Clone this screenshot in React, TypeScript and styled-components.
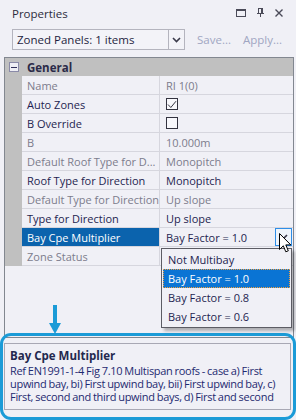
import React from "react";
import styled, { createGlobalStyle } from "styled-components";

const FONT = `"Open Sans", "Noto Sans", sans-serif`;

const Global = createGlobalStyle`
  html, body { margin: 0; padding: 0; background: #f0f0f6; }
  body { font-family: ${FONT}; font-size: 11px; color: #1e1e50; }
  * { box-sizing: border-box; }
`;

const Panel = styled.div`
  position: relative;
  width: 296px;
  height: 420px;
  background: #f0f0f6;
  display: flex;
  flex-direction: column;
  overflow: hidden;
`;

const TitleBar = styled.div`
  height: 27px;
  display: flex;
  align-items: center;
  padding: 0 12px 0 12px;
  font-size: 11.5px;
  color: #2c2c3c;
`;

const Title = styled.div`
  flex: 1;
  margin-top: -1px;
`;

const TitleIcons = styled.div`
  display: flex;
  align-items: center;
  gap: 11px;
  margin-top: -2px;
  margin-right: 1px;
`;

const Toolbar = styled.div`
  height: 21px;
  margin-top: 2px;
  display: flex;
  align-items: center;
  padding-left: 12px;
`;

const Combo = styled.div`
  width: 173px;
  height: 21px;
  border: 1px solid #b4b4be;
  display: flex;
  align-items: center;
  background: #f3f3f8;
`;

const ComboText = styled.div`
  flex: 1;
  padding-left: 4px;
  font-size: 11.5px;
  color: #1e1e40;
`;

const ComboButton = styled.div`
  width: 16px;
  height: 100%;
  border-left: 1px solid #b4b4be;
  display: flex;
  align-items: center;
  justify-content: center;
`;

const ToolLink = styled.span<{ $ml: number }>`
  margin-left: ${(p) => p.$ml}px;
  color: #a0a6c2;
  font-size: 11.5px;
`;

const Grid = styled.div`
  margin: 7px 2px 0 4px;
  height: 281px;
  border: 1px solid #828790;
  display: flex;
  flex-direction: column;
  position: relative;
`;

const HeaderRow = styled.div`
  height: 18px;
  background: #c0c0c0;
  display: flex;
  align-items: center;
  font-weight: 700;
  font-size: 11.5px;
  color: #2a2a48;
`;

const Expander = styled.div`
  width: 10px;
  height: 10px;
  margin-left: 4px;
  margin-right: 8px;
  border: 1px solid #8a8aa8;
  background: #eeeef4;
  display: flex;
  align-items: center;
  justify-content: center;
  &::after {
    content: "";
    width: 6px;
    height: 1px;
    background: #30305a;
  }
`;

const Row = styled.div`
  display: grid;
  grid-template-columns: 17px 138px 1fr;
  height: 19px;
`;

const Gutter = styled.div`
  background: #c0c0c0;
`;

const NameCell = styled.div<{ $muted?: boolean; $selected?: boolean }>`
  border-bottom: 1px solid #d6d6de;
  border-right: 1px solid #d6d6de;
  padding-left: 5px;
  display: flex;
  align-items: center;
  white-space: nowrap;
  overflow: hidden;
  color: ${(p) => (p.$selected ? "#ffffff" : p.$muted ? "#7c7c8c" : "#1e1e50")};
  background: ${(p) => (p.$selected ? "#0b63ad" : "transparent")};
`;

const ValueCell = styled.div<{ $muted?: boolean }>`
  border-bottom: 1px solid #d6d6de;
  padding-left: 6px;
  display: flex;
  align-items: center;
  white-space: nowrap;
  overflow: hidden;
  position: relative;
  color: ${(p) => (p.$muted ? "#7c7c8c" : "#1e1e50")};
`;

const Check = styled.div`
  width: 12px;
  height: 12px;
  border: 1px solid #333340;
  background: #f8f8fc;
  display: flex;
  align-items: center;
  justify-content: center;
`;

const EditorButton = styled.div`
  position: absolute;
  right: 1px;
  top: 0;
  width: 17px;
  height: 18px;
  border: 1px solid #2e8ee8;
  background: #eef4fb;
  display: flex;
  align-items: center;
  justify-content: center;
`;

const Popup = styled.div`
  position: absolute;
  left: 161px;
  top: 248px;
  width: 131px;
  border: 1px solid #5c5c64;
  background: #f0f0f6;
  box-shadow: 3px 3px 3px rgba(0, 0, 0, 0.28);
  padding: 1px 1px;
  z-index: 5;
`;

const PopupItem = styled.div<{ $selected?: boolean }>`
  height: 19px;
  display: flex;
  align-items: center;
  padding-left: 4px;
  color: ${(p) => (p.$selected ? "#ffffff" : "#1e1e50")};
  background: ${(p) => (p.$selected ? "#0a74d4" : "transparent")};
  border: 1px dotted ${(p) => (p.$selected ? "#f0a040" : "transparent")};
`;

const Description = styled.div`
  margin: 5px 5px 0 4px;
  height: 67px;
  border: 1px solid #a8a8b4;
  padding: 4px 3px 0 5px;
  overflow: hidden;
`;

const DescTitle = styled.div`
  font-weight: 700;
  font-size: 11.5px;
  color: #23284e;
  line-height: 15px;
  margin-bottom: 1px;
`;

const DescBody = styled.div`
  color: #1e2a70;
  line-height: 13px;
  letter-spacing: -0.3px;
  word-spacing: -0.5px;
`;

const Frame = styled.div`
  position: absolute;
  left: 0;
  top: 333px;
  width: 296px;
  height: 87px;
  border: 3.5px solid #1b9bd7;
  border-radius: 11px;
  pointer-events: none;
`;

const Arrow = styled.svg`
  position: absolute;
  left: 48px;
  top: 305px;
`;

const Cursor = styled.svg`
  position: absolute;
  left: 279px;
  top: 233px;
  z-index: 6;
`;

type Prop = {
  name: string;
  value?: string;
  muted?: boolean;
  check?: boolean;
  selected?: boolean;
};

const props: Prop[] = [
  { name: "Name", value: "RI 1(0)", muted: true },
  { name: "Auto Zones", check: true },
  { name: "B Override", check: false },
  { name: "B", value: "10.000m", muted: true },
  { name: "Default Roof Type for D...", value: "Monopitch", muted: true },
  { name: "Roof Type for Direction", value: "Monopitch" },
  { name: "Default Type for Direction", value: "Up slope", muted: true },
  { name: "Type for Direction", value: "Up slope" },
  { name: "Bay Cpe Multiplier", value: "Bay Factor = 1.0", selected: true },
  { name: "Zone Status", value: "", muted: true },
];

const Chevron = () => (
  <svg width="9" height="6" viewBox="0 0 9 6">
    <path d="M1 1 L4.5 4.5 L8 1" fill="none" stroke="#3a3a4a" strokeWidth="1.6" />
  </svg>
);

export default function App() {
  return (
    <>
      <Global />
      <Panel>
        <TitleBar>
          <Title>Properties</Title>
          <TitleIcons>
            <svg width="10" height="8" viewBox="0 0 10 8">
              <rect x="0.5" y="0.5" width="9" height="7" fill="none" stroke="#4a4a58" />
              <rect x="0" y="0" width="10" height="2" fill="#4a4a58" />
            </svg>
            <svg width="7" height="9" viewBox="0 0 7 9">
              <rect x="1.5" y="0.5" width="4" height="5" fill="none" stroke="#4a4a58" />
              <rect x="4" y="0.5" width="1.5" height="5" fill="#4a4a58" />
              <rect x="0" y="5" width="7" height="1" fill="#4a4a58" />
              <rect x="3" y="6" width="1" height="3" fill="#4a4a58" />
            </svg>
            <svg width="8" height="8" viewBox="0 0 8 8">
              <path d="M0.5 0.5 L7.5 7.5 M7.5 0.5 L0.5 7.5" stroke="#4a4a58" strokeWidth="1.4" />
            </svg>
          </TitleIcons>
        </TitleBar>
        <Toolbar>
          <Combo>
            <ComboText>Zoned Panels: 1 items</ComboText>
            <ComboButton>
              <Chevron />
            </ComboButton>
          </Combo>
          <ToolLink $ml={12}>Save...</ToolLink>
          <ToolLink $ml={12}>Apply...</ToolLink>
        </Toolbar>
        <Grid>
          <HeaderRow>
            <Expander />
            General
          </HeaderRow>
          {props.map((p) => (
            <Row key={p.name}>
              <Gutter />
              <NameCell $muted={p.muted} $selected={p.selected}>
                {p.name}
              </NameCell>
              <ValueCell $muted={p.muted}>
                {p.check !== undefined ? (
                  <Check>
                    {p.check && (
                      <svg width="10" height="9" viewBox="0 0 10 9">
                        <path d="M1 4.5 L3.8 7.5 L9 1.2" fill="none" stroke="#333340" strokeWidth="1" />
                      </svg>
                    )}
                  </Check>
                ) : (
                  p.value
                )}
                {p.selected && (
                  <EditorButton>
                    <Chevron />
                  </EditorButton>
                )}
              </ValueCell>
            </Row>
          ))}
        </Grid>
        <Description>
          <DescTitle>Bay Cpe Multiplier</DescTitle>
          <DescBody>
            Ref EN1991-1-4 Fig 7.10 Multispan roofs - case a) First upwind bay, bi) First upwind bay,
            bii) First upwind bay, c) First, second and third upwind bays, d) First and second
          </DescBody>
        </Description>
        <Popup>
          <PopupItem>Not Multibay</PopupItem>
          <PopupItem $selected>Bay Factor = 1.0</PopupItem>
          <PopupItem>Bay Factor = 0.8</PopupItem>
          <PopupItem>Bay Factor = 0.6</PopupItem>
        </Popup>
        <Cursor width="13" height="21" viewBox="0 0 13 21">
          <path
            d="M0.5 0.5 L0.5 16.5 L4.3 12.8 L6.8 18.8 L9.3 17.8 L6.8 11.9 L11.8 11.9 Z"
            fill="#ffffff"
            stroke="#000000"
            strokeWidth="1"
            strokeLinejoin="round"
          />
        </Cursor>
        <Arrow width="14" height="30" viewBox="0 0 14 30">
          <rect x="5" y="0" width="4" height="19" fill="#1b9bd7" />
          <path d="M1 18 L13 18 L7 29 Z" fill="#1b9bd7" />
        </Arrow>
        <Frame />
      </Panel>
    </>
  );
}
